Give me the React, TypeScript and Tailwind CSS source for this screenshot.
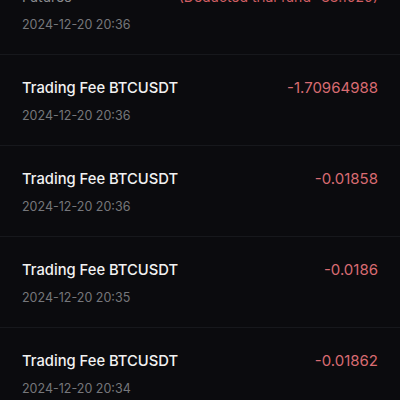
const rows = [
  { title: 'Trading Fee BTCUSDT', amount: '-1.70964988', time: '2024-12-20 20:36' },
  { title: 'Trading Fee BTCUSDT', amount: '-0.01858', time: '2024-12-20 20:36' },
  { title: 'Trading Fee BTCUSDT', amount: '-0.0186', time: '2024-12-20 20:35' },
  { title: 'Trading Fee BTCUSDT', amount: '-0.01862', time: '2024-12-20 20:34' },
];

function Row({ title, amount, time }: { title: string; amount: string; time: string }) {
  return (
    <div className="border-t border-[#17181c] px-[22px] pt-[22px] pb-[20px]">
      <div className="flex items-center justify-between">
        <span className="text-[14.75px] leading-[22px] font-medium text-[#f2f2f2]">{title}</span>
        <span className="text-[15px] leading-[22px] text-[#d96b72]">{amount}</span>
      </div>
      <div className="mt-[8px] text-[12.5px] leading-[18px] text-[#76777b]">{time}</div>
    </div>
  );
}

export default function App() {
  return (
    <div className="h-[400px] w-[400px] overflow-hidden bg-[#0b0b0e] font-['Inter',sans-serif]">
      <div className="px-[22px] pb-[20px]">
        <div className="-mt-[14px] flex items-center justify-between">
          <span className="text-[14px] leading-[22px] text-[#8a8b8f]">Futures</span>
          <span className="text-[14px] leading-[22px] text-[#d05e63]">(Deducted trial fund -33.1020)</span>
        </div>
        <div className="mt-[8px] text-[12.5px] leading-[18px] text-[#76777b]">2024-12-20 20:36</div>
      </div>
      {rows.map((r, i) => (
        <Row key={i} {...r} />
      ))}
    </div>
  );
}
